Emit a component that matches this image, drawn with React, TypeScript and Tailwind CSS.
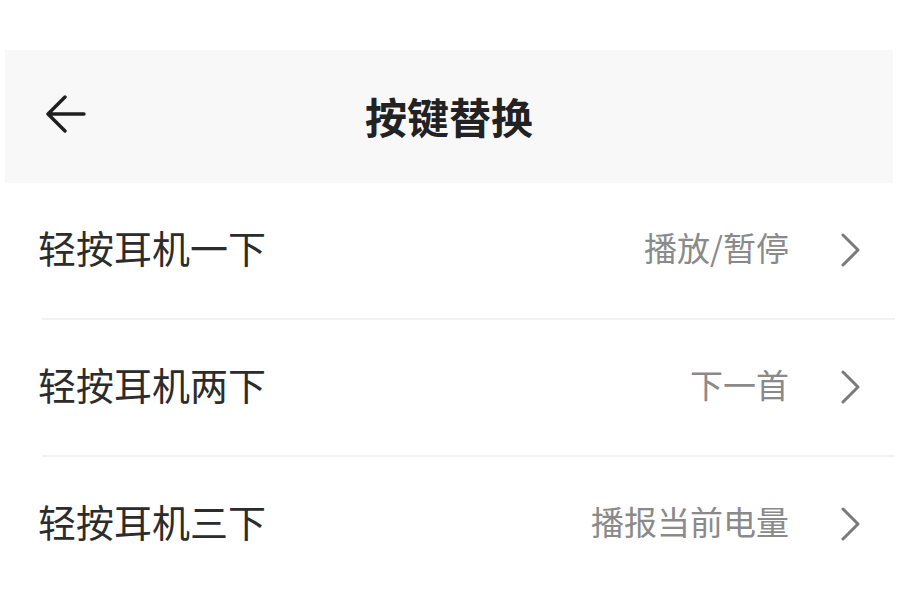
import React from "react";

const rows = [
  { label: "轻按耳机一下", value: "播放/暂停" },
  { label: "轻按耳机两下", value: "下一首" },
  { label: "轻按耳机三下", value: "播报当前电量" },
];

function Chevron() {
  return (
    <svg width="22" height="34" viewBox="0 0 22 34" fill="none">
      <path d="M3 2 L18 17 L3 32" stroke="#7a7a7a" strokeWidth="3" strokeLinecap="round" strokeLinejoin="round" />
    </svg>
  );
}

function BackArrow() {
  return (
    <svg width="40" height="38" viewBox="0 0 40 38" fill="none">
      <path d="M38 19 H3 M19 2 L2 19 L19 36" stroke="#1f1f1f" strokeWidth="3.4" strokeLinecap="round" strokeLinejoin="round" />
    </svg>
  );
}

export default function App() {
  return (
    <div
      className="w-[901px] h-[600px] bg-white overflow-hidden flex flex-col"
      style={{ fontFamily: '"Noto Sans CJK SC", "Noto Sans", sans-serif' }}
    >
      <div className="h-[50px] shrink-0" />
      <div className="ml-[5px] w-[888px] h-[133px] shrink-0 bg-[#f8f8f8] relative flex items-center justify-center">
        <div className="absolute left-[41px] top-[45px]">
          <BackArrow />
        </div>
        <span className="text-[42px] font-bold text-[#222] leading-none pb-[2px]">按键替换</span>
      </div>
      {rows.map((r, i) => (
        <div key={i} className="flex flex-col">
          <div className="h-[135px] flex items-center pl-[38px] pr-[39px]">
            <span className="text-[38px] text-[#2c2c2c] leading-none flex-1 pb-[7px]">{r.label}</span>
            <span className="text-[33px] text-[#8a8a8a] leading-none mr-[51px] pb-[6px]">{r.value}</span>
            <div className="pb-[2px]">
              <Chevron />
            </div>
          </div>
          {i < 2 && <div className="ml-[42px] mr-[6px] h-[2px] bg-[#f2f2f2]" />}
        </div>
      ))}
    </div>
  );
}
